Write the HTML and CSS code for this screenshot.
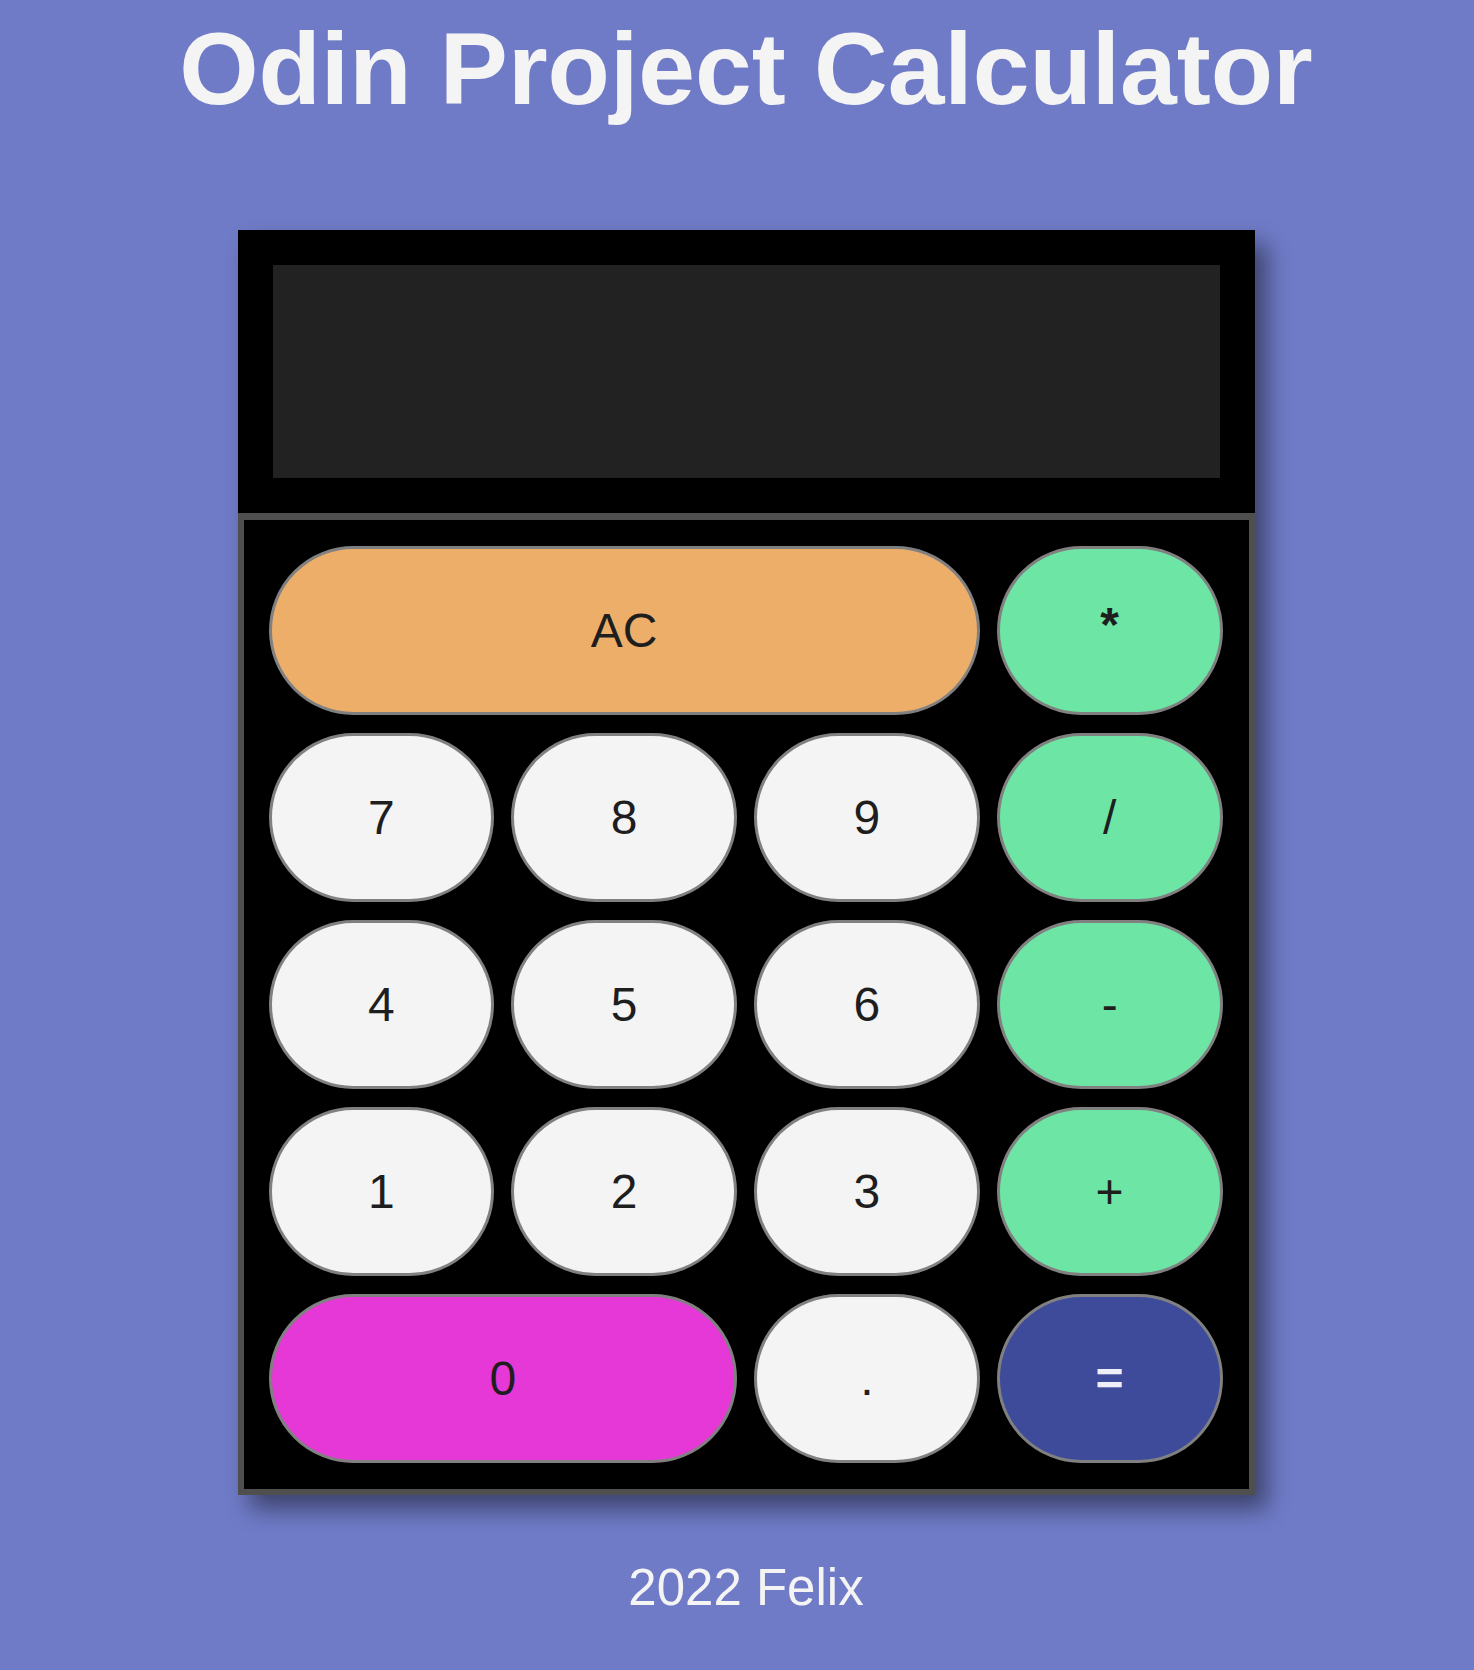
FILE: index.html
```html
<!DOCTYPE html>
<html lang="en">
<head>
<meta charset="utf-8">
<title>Odin Project Calculator</title>
<link rel="stylesheet" href="styles.css">
</head>
<body>
  <h1 class="title">Odin Project Calculator</h1>
  <main class="calculator">
    <div class="screen-area">
      <div class="screen"></div>
    </div>
    <div class="keypad">
      <button class="key key-clear key-wide">AC</button>
      <button class="key key-op key-star">*</button>
      <button class="key">7</button>
      <button class="key">8</button>
      <button class="key">9</button>
      <button class="key key-op">/</button>
      <button class="key">4</button>
      <button class="key">5</button>
      <button class="key">6</button>
      <button class="key key-op">-</button>
      <button class="key">1</button>
      <button class="key">2</button>
      <button class="key">3</button>
      <button class="key key-op">+</button>
      <button class="key key-zero key-double">0</button>
      <button class="key">.</button>
      <button class="key key-equals">=</button>
    </div>
  </main>
  <footer class="footer">2022 Felix</footer>
</body>
</html>
```
FILE: styles.css
```css
html {
  background: #6f7bc7;
}

body {
  margin: 0;
  padding: 0 0 0 18px;
  background: #6f7bc7;
  font-family: "Liberation Sans", Arial, Helvetica, sans-serif;
  display: flex;
  flex-direction: column;
  align-items: center;
  min-height: 1670px;
  box-sizing: border-box;
}

.title {
  margin: 9px 0 0;
  font-size: 102px;
  line-height: 120px;
  font-weight: 700;
  color: #f4f4f4;
  white-space: nowrap;
}

.calculator {
  margin-top: 101px;
  width: 1017px;
  background: #000;
  box-shadow: 12px 14px 22px rgba(0, 0, 0, 0.45);
}

.screen-area {
  padding: 35px;
  background: #000;
}

.screen {
  height: 213px;
  background: #222222;
}

.keypad {
  border: 6px solid #4f4f4f;
  border-top-width: 7px;
  background: #000;
  padding: 26px 26px 26px 25px;
  display: grid;
  grid-template-columns: repeat(4, 1fr);
  grid-auto-rows: 169px;
  column-gap: 17px;
  row-gap: 18px;
}

.key {
  margin: 0;
  padding: 0;
  border: 3px solid #808080;
  border-radius: 100px;
  background: #f4f4f4;
  color: #1e1e1e;
  font-family: "Liberation Sans", Arial, Helvetica, sans-serif;
  font-size: 48px;
  line-height: 1;
  cursor: pointer;
}

.key-star {
  font-weight: 700;
  padding-bottom: 12px;
}

.key-wide {
  grid-column: span 3;
}

.key-double {
  grid-column: span 2;
}

.key-clear {
  background: #edae6a;
}

.key-op {
  background: #6de5a4;
}

.key-zero {
  background: #e638d6;
}

.key-equals {
  background: #3e4a9a;
  color: #eeeef8;
  font-weight: 700;
}

.footer {
  margin-top: 63px;
  font-size: 51px;
  line-height: 60px;
  color: #f4f4f4;
}
```
